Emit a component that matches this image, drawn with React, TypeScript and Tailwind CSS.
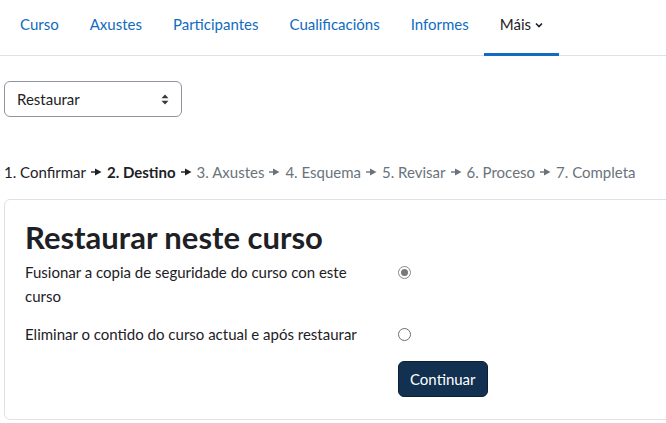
import { useState } from 'react'

const tabs = ['Curso', 'Axustes', 'Participantes', 'Cualificacións', 'Informes']

const steps = [
  { label: '1. Confirmar', state: 'done' },
  { label: '2. Destino', state: 'current' },
  { label: '3. Axustes', state: 'todo' },
  { label: '4. Esquema', state: 'todo' },
  { label: '5. Revisar', state: 'todo' },
  { label: '6. Proceso', state: 'todo' },
  { label: '7. Completa', state: 'todo' },
]

function StepArrow({ dark }: { dark: boolean }) {
  return (
    <svg width="11" height="8" viewBox="0 0 11 8" className={dark ? 'text-[#1d2125]' : 'text-[#6a737b]'}>
      <rect x="0" y="3.3" width="5" height="1.4" fill="currentColor" />
      <path d="M4 0.5 L10.5 4 L4 7.5 Z" fill="currentColor" />
    </svg>
  )
}

function Radio({ checked, onClick }: { checked: boolean; onClick: () => void }) {
  return (
    <button
      type="button"
      onClick={onClick}
      className={
        'w-[13px] h-[13px] rounded-full border flex items-center justify-center bg-white ' +
        (checked ? 'border-[#8a8a8a]' : 'border-[#6f6f6f]')
      }
    >
      {checked && <span className="w-[7px] h-[7px] rounded-full bg-[#7a7a7a]" />}
    </button>
  )
}

export default function App() {
  const [mode, setMode] = useState<'merge' | 'delete'>('merge')

  return (
    <div className="w-[666px] h-[423px] overflow-hidden bg-white text-[#1d2125] font-['Lato','Liberation_Sans',sans-serif] text-[15px]">
      {/* secondary navigation */}
      <nav className="flex h-[56px] border-b border-[#dee2e6] px-1">
        {tabs.map((t) => (
          <a key={t} className="pl-4 pr-[15px] pt-[13px] text-[#0f6cbf] leading-[22px]">
            {t}
          </a>
        ))}
        <a className="px-4 pt-[13px] h-[56px] border-b-[3px] border-[#0f6cbf] text-[#1d2125] leading-[22px] flex items-start gap-1">
          Máis
          <svg width="8" height="8" viewBox="0 0 8 8" className="mt-[8px]">
            <path d="M1 2.5 L4 5.5 L7 2.5" stroke="#1d2125" strokeWidth="1.6" fill="none" />
          </svg>
        </a>
      </nav>

      <div className="px-1">
        <div className="mt-[25px] w-[178px] h-[36px] border border-[#8f959e] rounded-[6px] flex items-center justify-between pl-3 pr-3">
          <span>Restaurar</span>
          <svg width="8" height="11" viewBox="0 0 8 11">
            <path d="M4 0.5 L7.5 4.2 H0.5 Z M4 10.5 L7.5 6.8 H0.5 Z" fill="#343a40" />
          </svg>
        </div>

        <div className="mt-[44px] flex items-center gap-[5px] leading-[22px] whitespace-nowrap">
          {steps.map((s, i) => (
            <span key={s.label} className="flex items-center gap-[5px]">
              <span
                className={
                  s.state === 'current'
                    ? 'font-bold text-[#1d2125]'
                    : s.state === 'done'
                    ? 'text-[#1d2125]'
                    : 'text-[#6a737b]'
                }
              >
                {s.label}
              </span>
              {i < steps.length - 1 && <StepArrow dark={i < 2} />}
            </span>
          ))}
        </div>

        <div className="mt-[16px] w-[700px] h-[221px] border border-[#dee2e6] rounded-[6px] px-5 pt-[19px]">
          <h2 className="text-[31px] font-bold leading-[37px] mb-[4px]">Restaurar neste curso</h2>

          <div className="flex leading-[24px]">
            <div className="w-[374px] pr-4">Fusionar a copia de seguridade do curso con este curso</div>
            <div className="pt-[6px] -ml-px">
              <Radio checked={mode === 'merge'} onClick={() => setMode('merge')} />
            </div>
          </div>

          <div className="flex leading-[24px] mt-[14px]">
            <div className="w-[374px] pr-4">Eliminar o contido do curso actual e após restaurar</div>
            <div className="pt-[6px] -ml-px">
              <Radio checked={mode === 'delete'} onClick={() => setMode('delete')} />
            </div>
          </div>

          <div className="flex mt-[15px]">
            <div className="w-[373px]" />
            <button className="h-[36px] px-[11px] rounded-[6px] bg-[#12304f] text-white border border-[#0b2036]">
              Continuar
            </button>
          </div>
        </div>
      </div>
    </div>
  )
}
